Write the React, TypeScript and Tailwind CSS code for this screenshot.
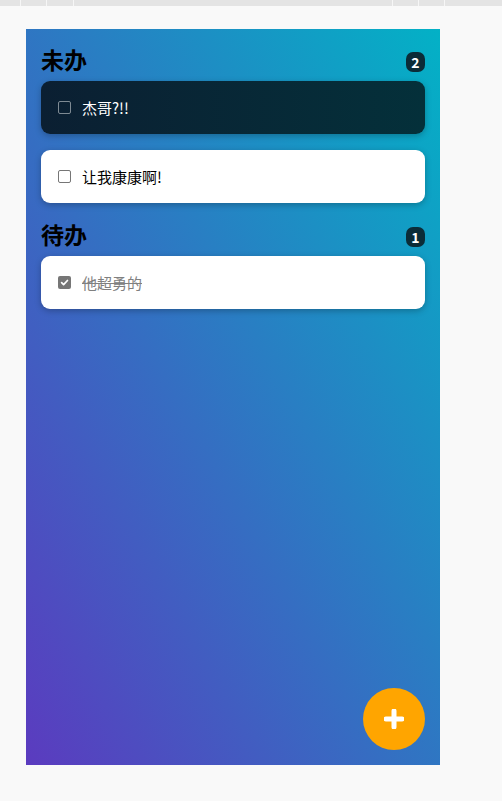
import React from "react";

const font = { fontFamily: '"Noto Sans CJK SC", "Noto Sans", sans-serif' };

function Box({ checked, dark }: { checked?: boolean; dark?: boolean }) {
  if (checked) {
    return (
      <span className="flex h-[13px] w-[13px] shrink-0 items-center justify-center rounded-[2px] bg-[#767676]">
        <svg width="9" height="9" viewBox="0 0 10 10">
          <path d="M1.8 5.2 L4 7.4 L8.3 2.8" fill="none" stroke="#fff" strokeWidth="1.9" strokeLinecap="round" strokeLinejoin="round" />
        </svg>
      </span>
    );
  }
  return (
    <span
      className={
        "h-[13px] w-[13px] shrink-0 rounded-[2px] border " +
        (dark ? "border-[#7e8a93]" : "border-[#767676] bg-white")
      }
    />
  );
}

function Card({ text, dark, checked }: { text: string; dark?: boolean; checked?: boolean }) {
  return (
    <div
      className={
        "mb-4 flex h-[53px] items-center gap-[11px] rounded-[9px] pl-[17px] shadow-[0_2px_6px_rgba(0,0,0,0.25)] " +
        (dark ? "bg-[linear-gradient(to_right,#0b1f32,#04303a)]" : "bg-white")
      }
    >
      <Box dark={dark} checked={checked} />
      <span
        className={
          "text-[15px] leading-none " +
          (dark ? "text-white" : checked ? "text-[#808080] line-through" : "text-black")
        }
      >
        {text}
      </span>
    </div>
  );
}

function Heading({ title, count }: { title: string; count: number }) {
  return (
    <div className="flex h-[37px] items-center justify-between">
      <span className="pb-[7px] text-[23px] font-bold leading-none text-black">{title}</span>
      <span className="mb-[2px] flex h-[20px] min-w-[19px] items-center justify-center rounded-[7px] bg-[#0b2c38] px-[5px] text-[14px] font-bold leading-none text-white">
        {count}
      </span>
    </div>
  );
}

export default function App() {
  const ticks = [20, 46, 73, 392, 418, 444];
  return (
    <div className="min-h-[801px] w-[502px] bg-[#f9f9f9]" style={font}>
      <div className="relative h-[6px] bg-[#e4e4e4]">
        {ticks.map((x) => (
          <span key={x} className="absolute top-0 h-[6px] w-[1px] bg-[#f6f6f6]" style={{ left: x }} />
        ))}
      </div>
      <div className="pl-[26px] pt-[23px]">
        <div className="relative flex h-[736px] w-[414px] flex-col bg-[linear-gradient(to_top_right,#5b3bbf,#03b1c6)] px-[15px] pt-[15px]">
          <Heading title="未办" count={2} />
          <Card text="杰哥?!!" dark />
          <Card text="让我康康啊!" />
          <Heading title="待办" count={1} />
          <Card text="他超勇的" checked />
          <button className="absolute bottom-[15px] right-[15px] flex h-[62px] w-[62px] items-center justify-center rounded-full bg-[#ffa500]">
            <svg width="20" height="20" viewBox="0 0 20 20">
              <path d="M10 2 V18 M2 10 H18" stroke="#fff" strokeWidth="5" strokeLinecap="round" />
            </svg>
          </button>
        </div>
      </div>
    </div>
  );
}
